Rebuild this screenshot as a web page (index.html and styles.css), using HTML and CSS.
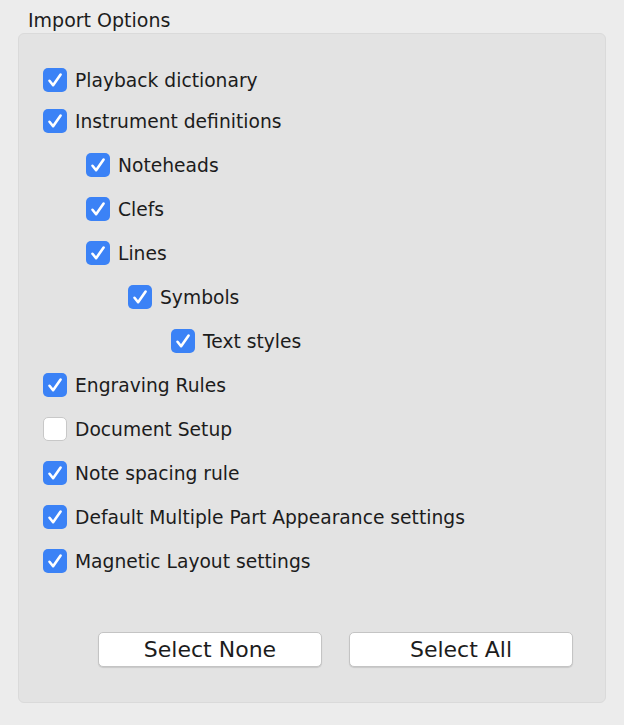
FILE: index.html
```html
<!DOCTYPE html>
<html lang="en">

<head>
  <meta charset="UTF-8">
  <meta name="viewport" content="width=device-width, initial-scale=1.0">
  <title>Import Options</title>
  <link rel="stylesheet" href="styles.css">
</head>

<body>

  <div class="group-title">Import Options</div>

  <div class="group-box">
    <div class="option-list">
      <label class="option first"><span class="box checked"></span>Playback dictionary</label>
      <label class="option"><span class="box checked"></span>Instrument definitions</label>
      <label class="option level-2"><span class="box checked"></span>Noteheads</label>
      <label class="option level-2"><span class="box checked"></span>Clefs</label>
      <label class="option level-2"><span class="box checked"></span>Lines</label>
      <label class="option level-3"><span class="box checked"></span>Symbols</label>
      <label class="option level-4"><span class="box checked"></span>Text styles</label>
      <label class="option"><span class="box checked"></span>Engraving Rules</label>
      <label class="option"><span class="box"></span>Document Setup</label>
      <label class="option"><span class="box checked"></span>Note spacing rule</label>
      <label class="option"><span class="box checked"></span>Default Multiple Part Appearance settings</label>
      <label class="option"><span class="box checked"></span>Magnetic Layout settings</label>
    </div>

    <div class="btn-row">
      <button class="btn">Select None</button>
      <button class="btn">Select All</button>
    </div>
  </div>

</body>

</html>
```

FILE: styles.css
```css
* {
  box-sizing: border-box;
  margin: 0;
  padding: 0;
}

body {
  font-family: 'DejaVu Sans', 'Noto Sans', sans-serif;
  background-color: #ececec;
  color: #1c1c1c;
  width: 624px;
  height: 725px;
  overflow: hidden;
}

.group-title {
  font-size: 19px;
  line-height: 22px;
  padding: 9px 0 0 28px;
  height: 33px;
}

.group-box {
  margin-left: 18px;
  width: 588px;
  height: 670px;
  background-color: #e3e3e3;
  border: 1px solid #dadada;
  border-radius: 6px;
  padding: 34px 0 0 24px;
}

.option-list {
  display: flex;
  flex-direction: column;
  gap: 20px;
}

.option {
  display: flex;
  align-items: center;
  gap: 8px;
  height: 24px;
  font-size: 18.7px;
  white-space: nowrap;
}

.option.first {
  margin-bottom: -3px;
}

.level-2 {
  padding-left: 43px;
}

.level-3 {
  padding-left: 85px;
}

.level-4 {
  padding-left: 128px;
}

/* checkbox square, tick drawn with a background svg */
.box {
  flex: none;
  width: 24px;
  height: 24px;
  border-radius: 5px;
  background-color: #fff;
  border: 1px solid #c8c8c8;
}

.box.checked {
  border: none;
  background-color: #3b82f6;
  background-image: url("data:image/svg+xml,%3Csvg xmlns='http://www.w3.org/2000/svg' width='24' height='24' viewBox='0 0 24 24'%3E%3Cpath d='M6.5 12.8l3.6 4.4L17.6 6.6' fill='none' stroke='%23fff' stroke-width='2.6' stroke-linecap='round' stroke-linejoin='round'/%3E%3C/svg%3E");
}

.btn-row {
  display: flex;
  gap: 27px;
  margin: 59px 0 0 55px;
}

.btn {
  width: 224px;
  height: 35px;
  font-family: inherit;
  font-size: 22px;
  color: #1c1c1c;
  background-color: #fff;
  border: 1px solid #c4c4c4;
  border-radius: 5px;
  box-shadow: 0 1px 1px rgba(0, 0, 0, 0.12);
  cursor: pointer;
}
```
